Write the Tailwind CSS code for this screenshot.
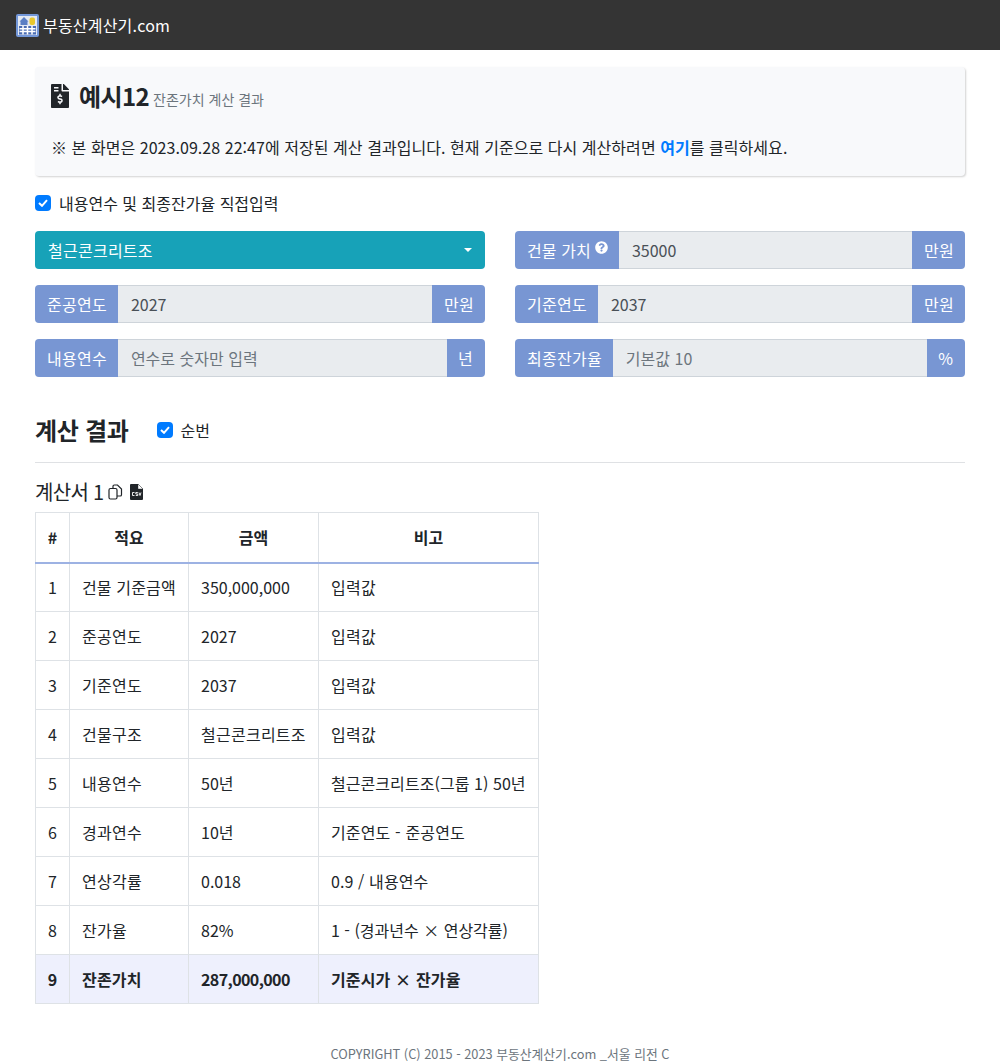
<!DOCTYPE html>
<html lang="ko">
<head>
    <meta charset="UTF-8">
    <title>부동산계산기.com</title>
    <script src="https://cdn.jsdelivr.net/npm/@tailwindcss/browser@4"></script>
</head>
<body class="bg-white text-[#212529] text-[16px] leading-[24px] font-['Noto_Sans_CJK_KR','Noto_Sans',sans-serif]">
    <!-- Navbar -->
    <nav class="h-[50px] bg-[#343434] flex items-center px-4 gap-[4px]">
        <svg width="23" height="23" viewBox="0 0 23 23">
            <rect width="23" height="23" rx="2" fill="#7397d8"/>
            <rect x="2" y="2" width="19" height="19" fill="#e4e9f3"/>
            <path d="M3.500 7.500 L8 3 L12.500 7.500 H11.500 V11 H4.500 V7.500 Z" fill="#5b7fc4"/>
            <rect x="13.500" y="3.500" width="5.500" height="7.500" rx="2" fill="#e8c72c"/>
            <rect x="3" y="12" width="17" height="8.500" fill="#4a6cb3"/>
            <path d="M3.500 14.800h16M3.500 17.600h16M7 12v8.500M11.500 12v8.500M16 12v8.500" stroke="#fff" stroke-width="1.500"/>
        </svg>
        <span class="text-white text-[16px] tracking-[0.2px]">부동산계산기.com</span>
    </nav>

    <main class="px-[35px]">
        <!-- Header box -->
        <section class="mt-[17px] h-[109px] bg-[#f8f9fb] rounded-[4px] shadow-[1px_1px_2px_rgba(0,0,0,0.18)] px-[16px] pt-[14px]">
            <div class="flex items-center h-[30px]">
                <svg width="18" height="24" viewBox="0 0 384 512" fill="#212529"><path d="M377 105L279.100 7c-4.500-4.500-10.600-7-17-7H256v128h128v-6.100c0-6.300-2.500-12.400-7-16.900zM224 136V0H24C10.700 0 0 10.700 0 24v464c0 13.300 10.700 24 24 24h336c13.300 0 24-10.700 24-24V160H248c-13.200 0-24-10.800-24-24zM64 72c0-4.400 3.600-8 8-8h80c4.400 0 8 3.600 8 8v16c0 4.400-3.600 8-8 8H72c-4.400 0-8-3.600-8-8V72zm0 64c0-4.400 3.600-8 8-8h80c4.400 0 8 3.600 8 8v16c0 4.400-3.600 8-8 8H72c-4.400 0-8-3.600-8-8v-16zm144 263.900V424c0 4.400-3.600 8-8 8h-16c-4.400 0-8-3.600-8-8v-24.300c-11.300-.6-22.300-4.500-31.400-11.400-3.900-2.900-4.100-8.800-.6-12.100l11.800-11.200c2.800-2.600 6.900-2.800 10.200-.7 3.900 2.400 8.300 3.700 12.800 3.700h28.100c6.500 0 11.800-5.900 11.800-13.200 0-6-3.600-11.200-8.800-12.700l-45-13.500c-18.600-5.600-31.600-23.400-31.600-43.400 0-24.500 19.100-44.400 42.700-45.100V216c0-4.400 3.600-8 8-8h16c4.400 0 8 3.600 8 8v24.300c11.300.6 22.300 4.500 31.400 11.400 3.900 2.900 4.100 8.800.6 12.100l-11.800 11.200c-2.800 2.600-6.900 2.800-10.200.7-3.900-2.400-8.300-3.700-12.800-3.700h-28.100c-6.500 0-11.800 5.900-11.800 13.200 0 6 3.600 11.200 8.800 12.700l45 13.500c18.600 5.600 31.600 23.400 31.600 43.400 0 24.500-19.100 44.400-42.700 45.100z"/></svg>
                <h1 class="ml-[10px] text-[24px] font-bold tracking-[-0.6px]">예시12</h1>
                <span class="ml-[4px] mt-[6px] text-[14px] text-[#6c757d]">잔존가치 계산 결과</span>
            </div>
            <p class="mt-[24px] tracking-[0.05px]">※ 본 화면은 2023.09.28 22:47에 저장된 계산 결과입니다. 현재 기준으로 다시 계산하려면 <a class="text-[#007bff] font-bold">여기</a>를 클릭하세요.</p>
        </section>

        <!-- Option -->
        <label class="flex items-center mt-[15px] h-[24px]">
            <span class="w-[16px] h-[16px] rounded-[4px] bg-[#007bff] flex items-center justify-center">
                <svg width="10" height="8" viewBox="0 0 10 8"><path d="M1 4l3 2.800L9 1.200" fill="none" stroke="#fff" stroke-width="2"/></svg>
            </span>
            <span class="ml-[8px]">내용연수 및 최종잔가율 직접입력</span>
        </label>

        <!-- Form -->
        <div class="grid grid-cols-2 gap-x-[30px] gap-y-[16px] mt-[16px]">
            <div class="h-[38px] bg-[#17a2b8] rounded-[4px] flex items-center justify-between pl-[13px] pr-[13px] text-white">
                <span class="tracking-[0.25px]">철근콘크리트조</span>
                <span class="w-0 h-0 border-x-[4px] border-x-transparent border-t-[4px] border-t-white"></span>
            </div>
            <div class="h-[38px] flex">
                <span class="bg-[#7896d3] text-white rounded-l-[4px] pl-[12px] pr-[11px] flex items-center gap-[4px] tracking-[0.1px]">건물 가치
                    <svg class="mb-[6px]" width="13" height="13" viewBox="0 0 512 512" fill="#fff"><path d="M504 256c0 137-111 248-248 248S8 393 8 256 119 8 256 8s248 111 248 248zM262.700 90c-54.500 0-89.300 23-116.500 63.800-3.500 5.300-2.400 12.400 2.700 16.300l34.700 26.300c5.200 3.900 12.600 3 16.700-2.100 17.900-22.700 30.100-35.800 57.300-35.800 20.400 0 45.700 13.100 45.700 33 0 15-12.400 22.700-32.600 34-23.600 13.200-54.800 29.700-54.800 70.900V300c0 6.600 5.400 12 12 12h56c6.600 0 12-5.400 12-12v-1.300c0-28.600 83.400-29.800 83.400-107.100C379.300 133.400 319.500 90 262.700 90zM256 336c-23.700 0-43 19.300-43 43s19.300 43 43 43 43-19.300 43-43-19.300-43-43-43z"/></svg>
                </span>
                <span class="flex-1 bg-[#e9ecef] border-y border-[#ced4da] px-[13px] flex items-center text-[#495057]">35000</span>
                <span class="bg-[#7896d3] text-white rounded-r-[4px] pl-[12px] pr-[11px] flex items-center tracking-[0.25px]">만원</span>
            </div>
            <div class="h-[38px] flex">
                <span class="bg-[#7896d3] text-white rounded-l-[4px] pl-[12px] pr-[11px] flex items-center tracking-[0.25px]">준공연도</span>
                <span class="flex-1 bg-[#e9ecef] border-y border-[#ced4da] px-[13px] flex items-center text-[#495057]">2027</span>
                <span class="bg-[#7896d3] text-white rounded-r-[4px] pl-[12px] pr-[11px] flex items-center tracking-[0.25px]">만원</span>
            </div>
            <div class="h-[38px] flex">
                <span class="bg-[#7896d3] text-white rounded-l-[4px] pl-[12px] pr-[11px] flex items-center tracking-[0.25px]">기준연도</span>
                <span class="flex-1 bg-[#e9ecef] border-y border-[#ced4da] px-[13px] flex items-center text-[#495057]">2037</span>
                <span class="bg-[#7896d3] text-white rounded-r-[4px] pl-[12px] pr-[11px] flex items-center tracking-[0.25px]">만원</span>
            </div>
            <div class="h-[38px] flex">
                <span class="bg-[#7896d3] text-white rounded-l-[4px] pl-[12px] pr-[11px] flex items-center tracking-[0.25px]">내용연수</span>
                <span class="flex-1 bg-[#e9ecef] border-y border-[#ced4da] px-[13px] flex items-center text-[#6c757d]">연수로 숫자만 입력</span>
                <span class="bg-[#7896d3] text-white rounded-r-[4px] pl-[11px] pr-[12px] flex items-center tracking-[0.25px]">년</span>
            </div>
            <div class="h-[38px] flex">
                <span class="bg-[#7896d3] text-white rounded-l-[4px] pl-[12px] pr-[11px] flex items-center tracking-[0.25px]">최종잔가율</span>
                <span class="flex-1 bg-[#e9ecef] border-y border-[#ced4da] px-[13px] flex items-center text-[#6c757d]">기본값 10</span>
                <span class="bg-[#7896d3] text-white rounded-r-[4px] pl-[11px] pr-[12px] flex items-center">%</span>
            </div>
        </div>

        <!-- Result -->
        <div class="flex items-center mt-[35px] h-[36px]">
            <h2 class="text-[24px] font-bold tracking-[-0.3px]">계산 결과</h2>
            <span class="ml-[28px] w-[16px] h-[16px] rounded-[4px] bg-[#007bff] flex items-center justify-center">
                <svg width="10" height="8" viewBox="0 0 10 8"><path d="M1 4l3 2.800L9 1.200" fill="none" stroke="#fff" stroke-width="2"/></svg>
            </span>
            <span class="ml-[8px]">순번</span>
        </div>
        <hr class="mt-[14px] border-[#dfe1e4]">

        <div class="flex items-center mt-[14px] h-[30px]">
            <span class="text-[20px] tracking-[-0.7px]">계산서 1</span>
            <svg class="ml-[5px]" width="15" height="16" viewBox="0 0 15 16" fill="none" stroke="#212529" stroke-width="1.200"><rect x="1" y="4.500" width="8" height="10.500" rx="1.500"/><path d="M5 4.500V2.300a1.300 1.300 0 0 1 1.300-1.300h3.200l4 4v5.700a1.300 1.300 0 0 1-1.300 1.300H9"/></svg>
            <svg class="ml-[7px]" width="13" height="16" viewBox="0 0 13 16"><path d="M0 1a1 1 0 0 1 1-1h7l5 5v10a1 1 0 0 1-1 1H1a1 1 0 0 1-1-1z" fill="#212529"/><path d="M8 0l5 5H8z" fill="#fff" stroke="#212529" stroke-width=".4"/><path d="M4.500 8.500h-2v3h2M7.800 8.500h-2v1.500h2v1.500h-2M9 8.500l1 3 1-3" fill="none" stroke="#fff" stroke-width=".9"/></svg>
        </div>

        <table class="mt-[5px] w-[503px] table-fixed border-collapse text-[16px]">
            <colgroup><col class="w-[34px]"><col class="w-[119px]"><col class="w-[130px]"><col class="w-[220px]"></colgroup>
            <thead>
                <tr class="h-[50px] text-center border-b-2 border-b-[#9db2e3]">
                    <th class="font-bold border-x border-t border-[#dee2e6]">#</th>
                    <th class="font-bold border-x border-t border-[#dee2e6]">적요</th>
                    <th class="font-bold border-x border-t border-[#dee2e6]">금액</th>
                    <th class="font-bold border-x border-t border-[#dee2e6]">비고</th>
                </tr>
            </thead>
            <tbody>
                <tr class="h-[49px]"><td class="border border-[#dee2e6] text-center">1</td><td class="border border-[#dee2e6] px-[12px] whitespace-nowrap tracking-[0.15px]">건물 기준금액</td><td class="border border-[#dee2e6] px-[12px]">350,000,000</td><td class="border border-[#dee2e6] px-[12px] tracking-[0.25px]">입력값</td></tr>
                <tr class="h-[49px]"><td class="border border-[#dee2e6] text-center">2</td><td class="border border-[#dee2e6] px-[12px] tracking-[0.25px]">준공연도</td><td class="border border-[#dee2e6] px-[12px]">2027</td><td class="border border-[#dee2e6] px-[12px] tracking-[0.25px]">입력값</td></tr>
                <tr class="h-[49px]"><td class="border border-[#dee2e6] text-center">3</td><td class="border border-[#dee2e6] px-[12px] tracking-[0.25px]">기준연도</td><td class="border border-[#dee2e6] px-[12px]">2037</td><td class="border border-[#dee2e6] px-[12px] tracking-[0.25px]">입력값</td></tr>
                <tr class="h-[49px]"><td class="border border-[#dee2e6] text-center">4</td><td class="border border-[#dee2e6] px-[12px] tracking-[0.25px]">건물구조</td><td class="border border-[#dee2e6] px-[12px] whitespace-nowrap tracking-[0.25px]">철근콘크리트조</td><td class="border border-[#dee2e6] px-[12px] tracking-[0.25px]">입력값</td></tr>
                <tr class="h-[49px]"><td class="border border-[#dee2e6] text-center">5</td><td class="border border-[#dee2e6] px-[12px] tracking-[0.25px]">내용연수</td><td class="border border-[#dee2e6] px-[12px]">50년</td><td class="border border-[#dee2e6] px-[12px] whitespace-nowrap tracking-[0.06px]">철근콘크리트조(그룹 1) 50년</td></tr>
                <tr class="h-[49px]"><td class="border border-[#dee2e6] text-center">6</td><td class="border border-[#dee2e6] px-[12px] tracking-[0.25px]">경과연수</td><td class="border border-[#dee2e6] px-[12px]">10년</td><td class="border border-[#dee2e6] px-[12px] tracking-[0.15px]">기준연도 - 준공연도</td></tr>
                <tr class="h-[49px]"><td class="border border-[#dee2e6] text-center">7</td><td class="border border-[#dee2e6] px-[12px] tracking-[0.25px]">연상각률</td><td class="border border-[#dee2e6] px-[12px]">0.018</td><td class="border border-[#dee2e6] px-[12px] tracking-[0.1px]">0.9 / 내용연수</td></tr>
                <tr class="h-[49px]"><td class="border border-[#dee2e6] text-center">8</td><td class="border border-[#dee2e6] px-[12px] tracking-[0.25px]">잔가율</td><td class="border border-[#dee2e6] px-[12px]">82%</td><td class="border border-[#dee2e6] px-[12px] whitespace-nowrap">1 - (경과년수 × 연상각률)</td></tr>
                <tr class="h-[49px] bg-[#eef0fd] font-bold"><td class="border border-[#dee2e6] text-center">9</td><td class="border border-[#dee2e6] px-[12px] tracking-[0.2px]">잔존가치</td><td class="border border-[#dee2e6] px-[12px] tracking-[-0.6px]">287,000,000</td><td class="border border-[#dee2e6] px-[12px] tracking-[0.15px]">기준시가 × 잔가율</td></tr>
            </tbody>
        </table>
    </main>

    <footer class="mt-[40px] h-[19px] text-center text-[12.800px] leading-[19px] text-[#6c757d]">COPYRIGHT (C) 2015 - 2023 부동산계산기.com _서울 리전 C</footer>
</body>
</html>
